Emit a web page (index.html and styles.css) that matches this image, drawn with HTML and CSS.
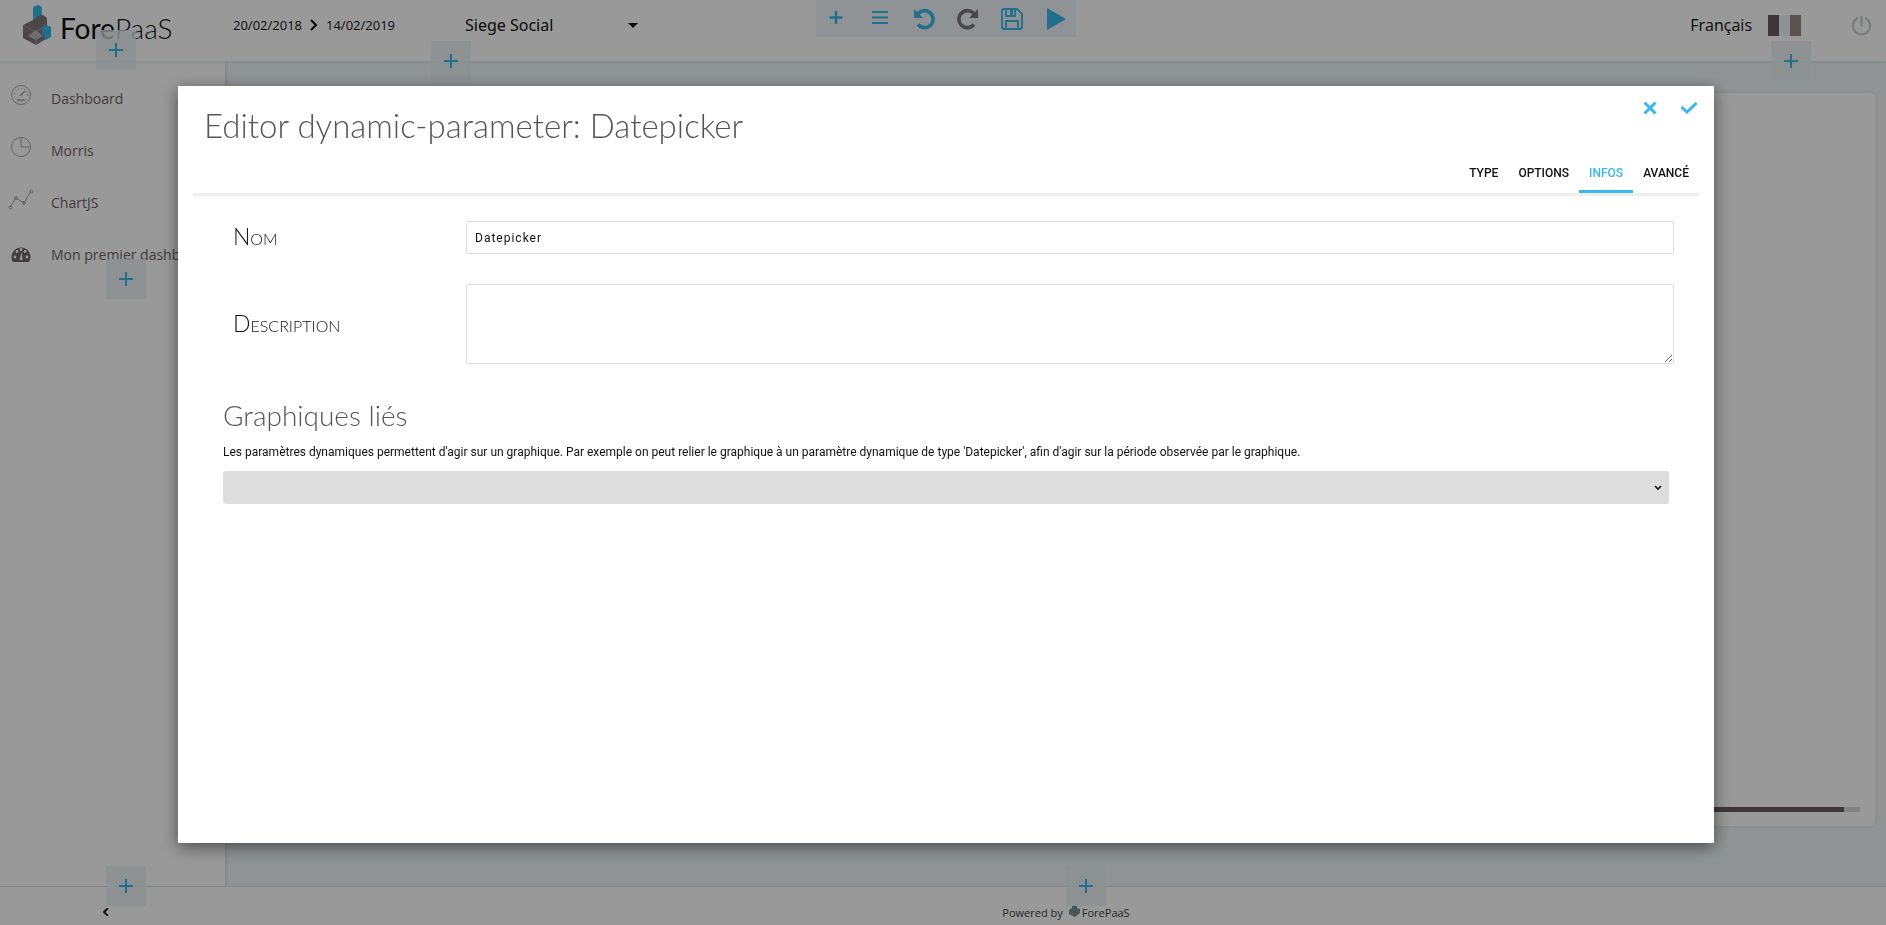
FILE: index.html
```html
<!DOCTYPE html>
<html lang="fr">
<head>
<meta charset="utf-8">
<title>ForePaaS</title>
<link rel="stylesheet" href="styles.css">
</head>
<body>
<svg class="defs" width="0" height="0" aria-hidden="true">
  <symbol id="plus" viewBox="0 0 14 14"><path d="M7 0v14M0 7h14" stroke="currentColor" stroke-width="2" fill="none"/></symbol>
  <symbol id="cube" viewBox="0 0 28 40">
    <path d="M10 2l5-2 4 2v14l-4 3-5-2z" fill="#38b8ec"/>
    <path d="M0 20l12-6 3-3 5-1 4 3v7l-1 14-10 6-13-7z" fill="#7d7577"/>
    <path d="M0 20l13 7 10-7M13 27v13" stroke="#aaa3a5" stroke-width="1" fill="none"/>
    <path d="M5 31l8-6 7 6-7 4z" fill="#b9b4b5"/>
    <path d="M19 22l5-2 4 2v10l-5 3-4-7z" fill="#38b8ec"/>
  </symbol>
</svg>
<div class="app">
  <header class="header">
    <div class="brand"><svg class="brand-mark"><use href="#cube"/></svg><span class="brand-name"><b>Fore</b>PaaS</span>
      <button class="add add-brand" aria-label="Ajouter au logo"><svg><use href="#plus"/></svg></button></div>
    <div class="dates"><span>20/02/2018</span><svg width="8" height="12" viewBox="0 0 8 12"><path d="M1 1l5 5-5 5" fill="none" stroke="currentColor" stroke-width="2"/></svg><span>14/02/2019</span></div>
    <button class="site"><span>Siege Social</span><svg width="10" height="5" viewBox="0 0 10 5"><path d="M0 0h10L5 5z" fill="currentColor"/></svg></button>
    <button class="add add-filter" aria-label="Ajouter un filtre"><svg><use href="#plus"/></svg></button>
    <nav class="toolbar" aria-label="Édition">
      <button aria-label="Ajouter"><svg viewBox="0 0 22 22"><path d="M11 3v13M4.500 9.500h13" stroke="currentColor" stroke-width="2.400"/></svg></button>
      <button aria-label="Menu"><svg viewBox="0 0 22 22"><path d="M3 4h16M3 9.500h16M3 15h16" stroke="currentColor" stroke-width="2.200"/></svg></button>
      <button aria-label="Annuler"><svg viewBox="0 0 22 22"><path d="M4.500 6.500A8.500 8.500 0 1 1 5 16.500" fill="none" stroke="currentColor" stroke-width="3.600"/><path d="M1 1v9h9z" fill="currentColor"/></svg></button>
      <button class="muted" aria-label="Rétablir"><svg viewBox="0 0 22 22"><path d="M17.500 6.500A8.500 8.500 0 1 0 17 16.500" fill="none" stroke="currentColor" stroke-width="3.600"/><path d="M21 1v9h-9z" fill="currentColor"/></svg></button>
      <button aria-label="Enregistrer"><svg viewBox="0 0 22 22"><path d="M2 1h14l5 5v13q0 2-2 2H3q-2 0-2-2V2zM5 1v7h9V1M5 21v-8h12v8" fill="none" stroke="currentColor" stroke-width="1.800"/><path d="M9 2h3v5H9z" fill="currentColor"/></svg></button>
      <button aria-label="Lancer"><svg viewBox="0 0 22 22"><path d="M2 0v22l19-11z" fill="currentColor"/></svg></button>
    </nav>
    <div class="account">
      <span class="lang">Français</span>
      <span class="flag"><i></i><i></i><i></i></span>
      <button class="power" aria-label="Déconnexion"><svg viewBox="0 0 22 22"><path d="M11 1v11M7 3.200a9 9 0 1 0 8 0" fill="none" stroke="currentColor" stroke-width="2.200"/></svg></button>
      <button class="add add-account" aria-label="Ajouter au compte"><svg><use href="#plus"/></svg></button>
    </div>
  </header>
  <aside class="sidebar">
    <ul class="menu">
      <li><a href="#"><svg viewBox="0 0 24 24"><circle cx="12" cy="12" r="9.500"/><circle cx="12" cy="12" r="6.500" stroke-dasharray="1 2"/><path d="M11 13l5-5M8 17h8" stroke-width="1.500"/></svg>Dashboard</a></li>
      <li><a href="#"><svg viewBox="0 0 24 24"><circle cx="12" cy="12" r="9.500"/><path d="M12 2.500V12h9.500"/></svg>Morris</a></li>
      <li><a href="#"><svg viewBox="0 0 24 24"><path d="M1 20l6-9 8 5 7-12"/><circle cx="1.500" cy="20.500" r="1.500"/><circle cx="7" cy="11" r="1.500"/><circle cx="15" cy="16" r="1.500"/><circle cx="22.500" cy="4.500" r="1.500"/></svg>ChartJS</a></li>
      <li><a href="#"><svg class="solid" viewBox="0 0 24 24"><path d="M4 20a9.500 9.500 0 1 1 16 0z"/><g class="holes"><circle cx="6" cy="15" r="1.400"/><circle cx="8" cy="9.500" r="1.400"/><circle cx="12" cy="7.500" r="1.400"/><circle cx="16" cy="9.500" r="1.400"/><circle cx="18" cy="15" r="1.400"/><path d="M12.500 10l1 8h-3z"/></g></svg>Mon premier dashboard</a></li>
    </ul>
    <button class="add add-menu" aria-label="Ajouter un menu"><svg><use href="#plus"/></svg></button>
    <div class="sidebar-foot">
      <button class="add add-foot" aria-label="Ajouter en bas du menu"><svg><use href="#plus"/></svg></button>
      <button class="collapse" aria-label="Réduire"><svg width="6" height="8" viewBox="0 0 6 8"><path d="M5 0L1 4l4 4" fill="none" stroke="currentColor" stroke-width="1.800"/></svg></button>
    </div>
  </aside>
  <main class="main"><section class="panel"><div class="progress"><span></span></div></section></main>
  <footer class="footer">
    <button class="add add-footer" aria-label="Ajouter au pied de page"><svg><use href="#plus"/></svg></button>
    <span>Powered by</span><svg class="foot-mark" viewBox="0 0 12 12"><path d="M1 5l3-2V1l3-1 2 1v2l3 1v4l-5 4-6-3z" fill="#85878a"/><path d="M4 1l2-1 2 1v3H4zM9 5l3-1v4H9z" fill="#4c9cc0"/></svg><span>ForePaaS</span>
  </footer>
</div>

<div class="overlay">
  <section class="dialog" role="dialog" aria-labelledby="title">
    <header class="dialog-head">
      <h1 id="title">Editor dynamic-parameter: Datepicker</h1>
      <div class="actions">
        <button aria-label="Fermer"><svg width="14" height="14" viewBox="0 0 14 14"><path d="M1.500 1.500l11 11M12.500 1.500l-11 11" fill="none" stroke="currentColor" stroke-width="3"/></svg></button>
        <button aria-label="Valider"><svg width="18" height="12" viewBox="0 0 18 12"><path d="M1.500 5l5.500 5 9.500-9" fill="none" stroke="currentColor" stroke-width="3"/></svg></button>
      </div>
    </header>
    <nav class="tabs">
      <button>TYPE</button><button>OPTIONS</button><button class="active">INFOS</button><button>AVANCÉ</button>
    </nav>
    <form class="form">
      <div class="row"><label for="name">Nom</label><input id="name" type="text" value="Datepicker"></div>
      <div class="row"><label for="desc">Description</label><textarea id="desc"></textarea></div>
    </form>
    <section class="linked">
      <h2>Graphiques liés</h2>
      <label for="charts">Les paramètres dynamiques permettent d'agir sur un graphique. Par exemple on peut relier le graphique à un paramètre dynamique de type 'Datepicker', afin d'agir sur la période observée par le graphique.</label>
      <div class="select"><select id="charts"><option></option></select>
        <svg width="8" height="6" viewBox="0 0 8 6"><path d="M1 1l3 3 3-3" fill="none" stroke="currentColor" stroke-width="1.600"/></svg></div>
    </section>
  </section>
</div>
</body>
</html>
```
FILE: styles.css
```css
* { box-sizing: border-box; }
body { margin: 0; font-family: "Open Sans", sans-serif; color: #111; }
button { padding: 0; border: 0; background: none; font: inherit; color: inherit; }
svg { display: block; flex: none; }
.defs { position: absolute; }

.app {
  display: grid;
  grid-template: 61px 1fr 39px / 225px 1fr;
  height: 100vh;
  overflow: hidden;
  background: #eef6f8;
}
.header {
  grid-column: 1 / -1;
  position: relative;
  z-index: 2;
  display: flex;
  align-items: center;
  padding-bottom: 11px;
  background: #fff;
  box-shadow: 0 1px 4px #d8e2e4;
}
.brand { position: relative; display: flex; align-items: center; gap: 9px; width: 233px; padding-left: 23px; }
.brand-mark { width: 28px; height: 40px; }
.brand-name { font: 300 28px/40px Lato, sans-serif; padding-top: 6px; }
.brand-name b { font-weight: 400; }
.dates { display: flex; align-items: center; gap: 8px; width: 232px; font-size: 13px; }
.site { display: flex; align-items: center; justify-content: space-between; width: 173px; font-size: 16px; font-family: "Noto Sans", sans-serif; }
.toolbar {
  position: absolute;
  top: 0;
  left: calc(50% - 127px);
  display: flex;
  gap: 22px;
  height: 37px;
  padding: 6px 9px;
  color: #38b8ec;
  background: #eef6f8;
}
.toolbar svg { width: 22px; height: 22px; }
.toolbar .muted { color: #7d7577; }
.account { position: relative; display: flex; align-items: center; margin-left: auto; padding-right: 14px; font-size: 16px; }
.flag { display: flex; margin: 0 50px 0 16px; }
.flag i { width: 11px; height: 21px; background: #eef3f5; }
.flag i:first-child { background: #675d60; }
.flag i:last-child { background: #99898b; }
.power { color: #c8cecf; }
.power svg { width: 21px; height: 21px; }

.add {
  position: absolute;
  z-index: 3;
  display: grid;
  place-items: center;
  width: 40px;
  height: 40px;
  color: #38b8ec;
  background: rgba(232, 241, 243, .8);
}
.add svg { width: 14px; height: 14px; }
.add-brand { left: 96px; top: 28px; }
.add-filter { left: 431px; top: 41px; }
.add-account { right: 75px; top: 27px; }
.add-menu { left: 106px; top: 198px; }
.add-foot { left: 106px; top: -21px; }
.add-footer { left: calc(50% + 10px); top: -21px; }

.sidebar {
  grid-row: 2 / 4;
  position: relative;
  display: flex;
  flex-direction: column;
  justify-content: space-between;
  background: #fff;
  box-shadow: 1px 0 3px #ccd6d9;
}
.menu { margin: 0; padding: 11px 0 0; list-style: none; }
.menu a {
  display: flex;
  align-items: center;
  gap: 18px;
  height: 52px;
  padding-left: 9px;
  color: #6e6466;
  font-size: 14px;
  text-decoration: none;
  white-space: nowrap;
}
.menu svg { width: 24px; height: 24px; margin-bottom: 6px; fill: none; stroke: #a5a9aa; overflow: visible; }
.menu .solid { margin-bottom: 0; fill: #6e6466; stroke: none; }
.menu .holes { fill: #fff; }
.sidebar-foot { position: relative; height: 39px; border-top: 1px solid #dbe0e2; }
.collapse { display: block; padding: 21px 0 0 103px; color: #111; }

.main { padding: 32px 11px 60px; }
.panel { display: flex; align-items: flex-end; height: 100%; padding: 14px 15px; border-radius: 5px; background: #fff; box-shadow: 0 0 4px #dbe2e4; }
.progress { flex: 1; height: 5px; background: #d8dcdd; }
.progress span { display: block; width: 99%; height: 100%; background: #665c5f; }
.footer {
  position: relative;
  display: flex;
  align-items: center;
  justify-content: center;
  gap: 5px;
  padding-top: 12px;
  padding-left: 21px;
  border-top: 1px solid #dbe2e4;
  background: #fff;
  color: #444;
  font-size: 11px;
}
.foot-mark { width: 12px; height: 12px; margin-right: -3px; margin-bottom: 3px; }

.overlay {
  position: fixed;
  inset: 0;
  z-index: 10;
  display: grid;
  padding: 86px 172px 82px 178px;
  background: rgba(0, 0, 0, .4);
}
.dialog { padding: 0 15px; background: #fff; box-shadow: 0 4px 16px rgba(0, 0, 0, .5); font-family: Roboto, sans-serif; }
.dialog-head { display: flex; justify-content: space-between; height: 72px; padding-left: 11px; }
h1, h2 { margin: 0; font-family: Lato, sans-serif; font-weight: 300; color: #555; }
h1 { padding-top: 15px; font-size: 33px; line-height: 48px; }
h2 { font-size: 28px; line-height: 38px; }
.actions { display: flex; gap: 23px; align-items: center; height: 43px; padding-right: 1px; color: #38b8ec; }
.tabs { display: flex; justify-content: flex-end; height: 38px; border-bottom: 3px solid #eee; }
.tabs button { padding: 0 10px 2px; border-bottom: 3px solid transparent; font-size: 12px; font-weight: 500; }
.tabs .active { border-color: #38b8ec; color: #38b8ec; }
.form { display: grid; gap: 30px; padding: 25px 25px 0 40px; }
.row { display: grid; grid-template-columns: 233px 1fr; align-items: center; }
.row label { padding-bottom: 3px; font: 300 23px/30px Lato, sans-serif; font-variant: small-caps; }
.row input, .row textarea {
  width: 100%;
  height: 33px;
  padding: 0 8px;
  border: 1px solid #ddd;
  border-radius: 2px;
  font: 12px Roboto, sans-serif;
  letter-spacing: 1px;
  color: #111;
}
.row textarea { display: block; height: 80px; resize: vertical; }
.linked { padding: 32px 30px 0; }
.linked label { display: block; padding-top: 8px; font-size: 12px; line-height: 20px; }
.select { position: relative; margin-top: 9px; }
.select select { display: block; width: 100%; height: 33px; border: 0; border-radius: 3px; background: #ddd; appearance: none; }
.select svg { position: absolute; right: 7px; top: 14px; pointer-events: none; }
```
